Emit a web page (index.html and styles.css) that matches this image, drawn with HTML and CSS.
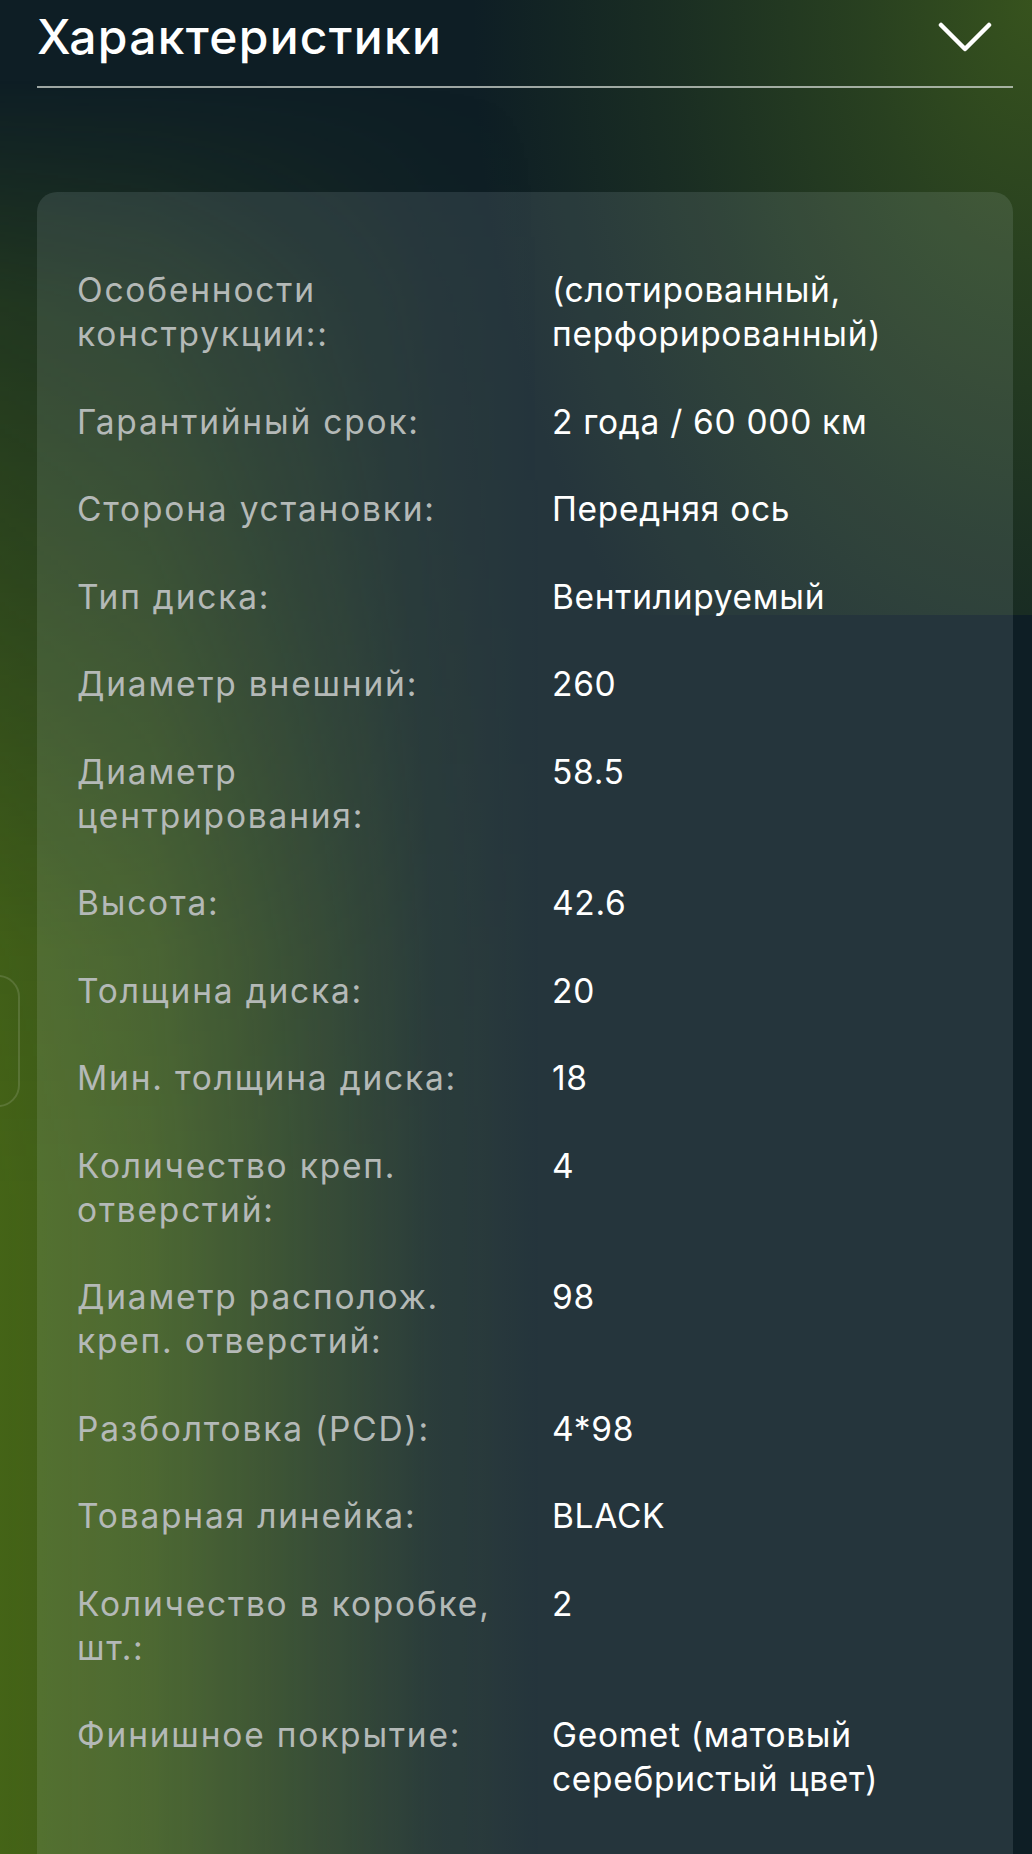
FILE: index.html
```html
<!DOCTYPE html>
<html lang="ru">
<head>
<meta charset="utf-8">
<title>Характеристики</title>
<link rel="stylesheet" href="styles.css">
</head>
<body>
<div class="page">
  <span class="side-btn"></span>
  <header class="head">
    <h2 class="title">Характеристики</h2>
    <svg class="chev" width="54" height="32" viewBox="0 0 54 32" aria-hidden="true">
      <path d="M3 4 L27 28 L51 4" />
    </svg>
  </header>
  <section class="card">
    <dl class="specs">
      <dt>Особенности конструкции::</dt><dd>(слотированный, перфорированный)</dd>
      <dt>Гарантийный срок:</dt><dd>2 года / 60 000 км</dd>
      <dt>Сторона установки:</dt><dd>Передняя ось</dd>
      <dt>Тип диска:</dt><dd>Вентилируемый</dd>
      <dt>Диаметр внешний:</dt><dd>260</dd>
      <dt>Диаметр центрирования:</dt><dd>58.5</dd>
      <dt>Высота:</dt><dd>42.6</dd>
      <dt>Толщина диска:</dt><dd>20</dd>
      <dt>Мин. толщина диска:</dt><dd>18</dd>
      <dt>Количество креп. отверстий:</dt><dd>4</dd>
      <dt>Диаметр располож. креп. отверстий:</dt><dd>98</dd>
      <dt>Разболтовка (PCD):</dt><dd>4*98</dd>
      <dt>Товарная линейка:</dt><dd>BLACK</dd>
      <dt>Количество в коробке, шт.:</dt><dd>2</dd>
      <dt>Финишное покрытие:</dt><dd>Geomet (матовый серебристый цвет)</dd>
    </dl>
  </section>
</div>
</body>
</html>
```

FILE: styles.css
```css
html, body {
  margin: 0;
  padding: 0;
  background: #0e1e25;
}

.page {
  position: relative;
  z-index: 0;
  width: 1032px;
  height: 1854px;
  overflow: hidden;
  font-family: "Inter", "Noto Sans", sans-serif;
  color: #ffffff;
  background-color: #0e1e25;
  background-image:
    radial-gradient(ellipse 560px 900px at 100% 0,
      rgba(62, 92, 28, 0.85) 0%,
      rgba(62, 92, 28, 0.55) 30%,
      rgba(62, 92, 28, 0.25) 65%,
      rgba(62, 92, 28, 0) 100%);
  background-size: 100% 615px;
  background-repeat: no-repeat;
}

/* green glow rising from the lower left */
.page::before {
  content: "";
  position: absolute;
  inset: 0;
  z-index: -1;
  pointer-events: none;
  background: linear-gradient(to right,
    rgba(72, 104, 22, 0.95) 0,
    rgba(72, 104, 22, 0.78) 150px,
    rgba(72, 104, 22, 0.42) 300px,
    rgba(72, 104, 22, 0.12) 430px,
    rgba(72, 104, 22, 0) 540px);
  -webkit-mask-image: linear-gradient(to bottom,
    transparent 80px,
    rgba(0, 0, 0, 0.35) 300px,
    rgba(0, 0, 0, 0.6) 600px,
    rgba(0, 0, 0, 0.92) 950px,
    #000 1200px);
  mask-image: linear-gradient(to bottom,
    transparent 80px,
    rgba(0, 0, 0, 0.35) 300px,
    rgba(0, 0, 0, 0.6) 600px,
    rgba(0, 0, 0, 0.92) 950px,
    #000 1200px);
}

.side-btn {
  position: absolute;
  left: -40px;
  top: 975px;
  width: 56px;
  height: 128px;
  border: 2px solid rgba(255, 255, 255, 0.13);
  border-radius: 22px;
}

.head {
  display: flex;
  align-items: center;
  justify-content: space-between;
  height: 74px;
  padding-bottom: 12px;
  margin: 0 19px 0 37px;
  border-bottom: 2px solid rgba(205, 212, 205, 0.75);
}

.title {
  margin: 0;
  font-size: 48px;
  font-weight: 500;
  letter-spacing: 1.3px;
  line-height: 1;
  color: #ffffff;
}

.chev {
  display: block;
  margin-right: 21px;
  fill: none;
  stroke: #ffffff;
  stroke-width: 4.5;
  stroke-linecap: round;
  stroke-linejoin: round;
}

.card {
  margin: 104px 19px 0 37px;
  padding: 76px 40px 80px 40px;
  border-radius: 20px;
  background: rgba(230, 245, 255, 0.11);
}

.specs {
  display: grid;
  grid-template-columns: 435px 1fr;
  column-gap: 40px;
  row-gap: 43.5px;
  margin: 0;
  font-size: 33.5px;
  line-height: 44px;
}

.specs dt {
  color: #b4b9b7;
  letter-spacing: 1.8px;
}

.specs dd {
  margin: 0;
  color: #ffffff;
  letter-spacing: 0.7px;
}
```
